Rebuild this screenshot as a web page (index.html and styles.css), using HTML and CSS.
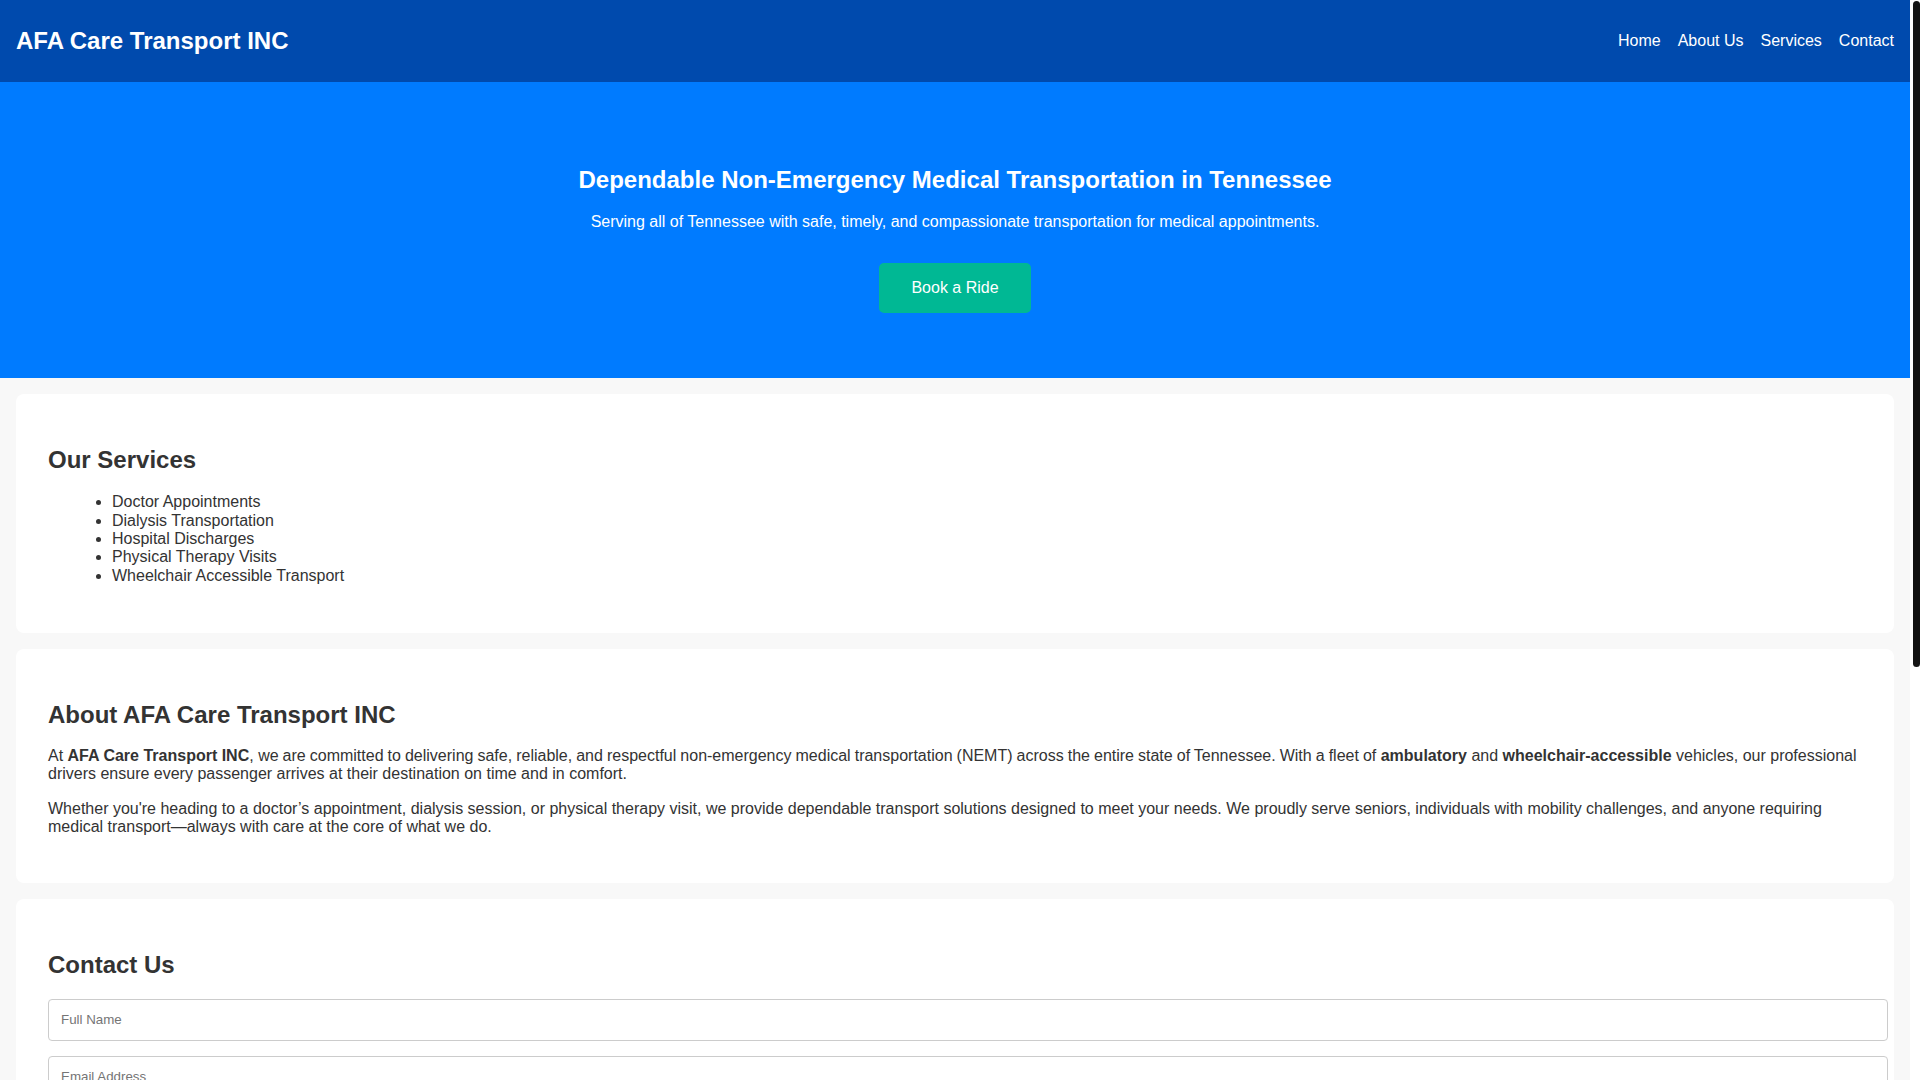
FILE: index.html
```html
<!DOCTYPE html>
<html lang="en">
<head>
<meta charset="utf-8">
<title>AFA Care Transport INC</title>
<link rel="stylesheet" href="styles.css">
</head>
<body>
<div class="scroll-thumb" aria-hidden="true"></div>
<header class="site-header">
  <h1 class="brand">AFA Care Transport INC</h1>
  <nav class="nav">
    <a href="#home">Home</a>
    <a href="#about">About Us</a>
    <a href="#services">Services</a>
    <a href="#contact">Contact</a>
  </nav>
</header>

<section class="hero" id="home">
  <h2 class="hero-title">Dependable Non-Emergency Medical Transportation in Tennessee</h2>
  <p class="hero-sub">Serving all of Tennessee with safe, timely, and compassionate transportation for medical appointments.</p>
  <div class="hero-actions"><a class="btn" href="#contact">Book a Ride</a></div>
</section>

<section class="card" id="services">
  <h2>Our Services</h2>
  <ul class="services">
    <li>Doctor Appointments</li>
    <li>Dialysis Transportation</li>
    <li>Hospital Discharges</li>
    <li>Physical Therapy Visits</li>
    <li>Wheelchair Accessible Transport</li>
  </ul>
</section>

<section class="card about" id="about">
  <h2>About AFA Care Transport INC</h2>
  <p>At <strong>AFA Care Transport INC</strong>, <span class="tight">we are committed to delivering safe, reliable, and respectful non-emergency medical transportation (NEMT) across the entire state of Tennessee. With a fleet of</span> <strong>ambulatory</strong> and <strong>wheelchair-accessible</strong> vehicles, our professional drivers ensure every passenger arrives at their destination on time and in comfort.</p>
  <p>Whether you're heading to a doctor’s appointment, dialysis session, or physical therapy visit, we provide dependable transport solutions designed to meet your needs. We proudly serve seniors, individuals with mobility challenges, and anyone requiring medical transport—always with care at the core of what we do.</p>
</section>

<section class="card" id="contact">
  <h2>Contact Us</h2>
  <form class="contact-form">
    <input class="field" type="text" placeholder="Full Name">
    <input class="field" type="email" placeholder="Email Address">
    <input class="field" type="tel" placeholder="Phone Number">
    <textarea class="field area" placeholder="Your Message"></textarea>
    <button class="btn submit" type="button">Send Message</button>
  </form>
</section>

<footer class="site-footer">
  <p>AFA Care Transport INC &middot; Serving all of Tennessee</p>
  <p>&copy; 2025 AFA Care Transport INC. All rights reserved.</p>
</footer>
</body>
</html>
```

FILE: styles.css
```css
html {
  margin: 0;
  padding: 0;
  background: #ffffff;
}
body {
  margin: 0 10px 0 0;
  padding: 0;
  font-family: "Liberation Sans", Arial, Helvetica, sans-serif;
  background: #f8f8f8;
  color: #333;
  font-size: 16px;
}
.scroll-thumb {
  position: fixed;
  top: 1px;
  right: 0;
  width: 7px;
  height: 666px;
  background: #141414;
  border-radius: 4px;
  z-index: 10;
}
.site-header {
  background: #004aad;
  color: #fff;
  display: flex;
  justify-content: space-between;
  align-items: center;
  padding: 27px 16px;
}
.brand {
  margin: 0;
  font-size: 24px;
  font-weight: bold;
  line-height: 27.6px;
}
.nav {
  display: flex;
  gap: 17px;
}
.nav a {
  color: #fff;
  text-decoration: none;
  font-size: 16px;
}
.hero {
  background: #007bff;
  color: #fff;
  text-align: center;
  padding: 84px 20px 65px;
}
.hero-title {
  margin: 0 0 20px;
  font-size: 24px;
  line-height: 27.6px;
}
.hero-sub {
  margin: 0 0 31px;
  font-size: 16px;
  line-height: 18.4px;
}
.hero-actions {
  display: flex;
  justify-content: center;
}
.btn {
  display: inline-block;
  background: #00b894;
  color: #fff;
  text-decoration: none;
  padding: 16px 32px;
  border-radius: 5px;
  font-size: 16px;
  line-height: 18px;
  border: none;
  font-family: "Liberation Sans", Arial, sans-serif;
}
.card {
  background: #fff;
  margin: 16px;
  padding: 32px;
  border-radius: 8px;
}
.card h2 {
  font-size: 24px;
  line-height: 27.6px;
  margin: 20px 0;
  color: #333;
}
.card p {
  margin: 16px 0;
  line-height: 18.4px;
}
.tight {
  word-spacing: -0.42px;
}
.about h2 {
  margin-bottom: 18px;
}
.about p:last-child {
  margin-bottom: 15px;
}
.services {
  margin: 16px 0;
  padding-left: 64px;
  line-height: 18.4px;
}
.contact-form {
  margin: 0 0 16px;
}
.field {
  display: block;
  width: 100%;
  padding: 12px;
  margin: 0 0 15px;
  border: 1px solid #ccc;
  border-radius: 4px;
  font-family: "Liberation Sans", Arial, sans-serif;
  font-size: 13.333px;
  line-height: 16px;
  color: #333;
  background: #fff;
}
.area {
  height: 150px;
  resize: vertical;
}
.submit {
  cursor: pointer;
}
.site-footer {
  background: #004aad;
  color: #fff;
  text-align: center;
  padding: 48px 16px;
  min-height: 273px;
  box-sizing: border-box;
}
.site-footer p {
  margin: 0 0 16px;
}
```
